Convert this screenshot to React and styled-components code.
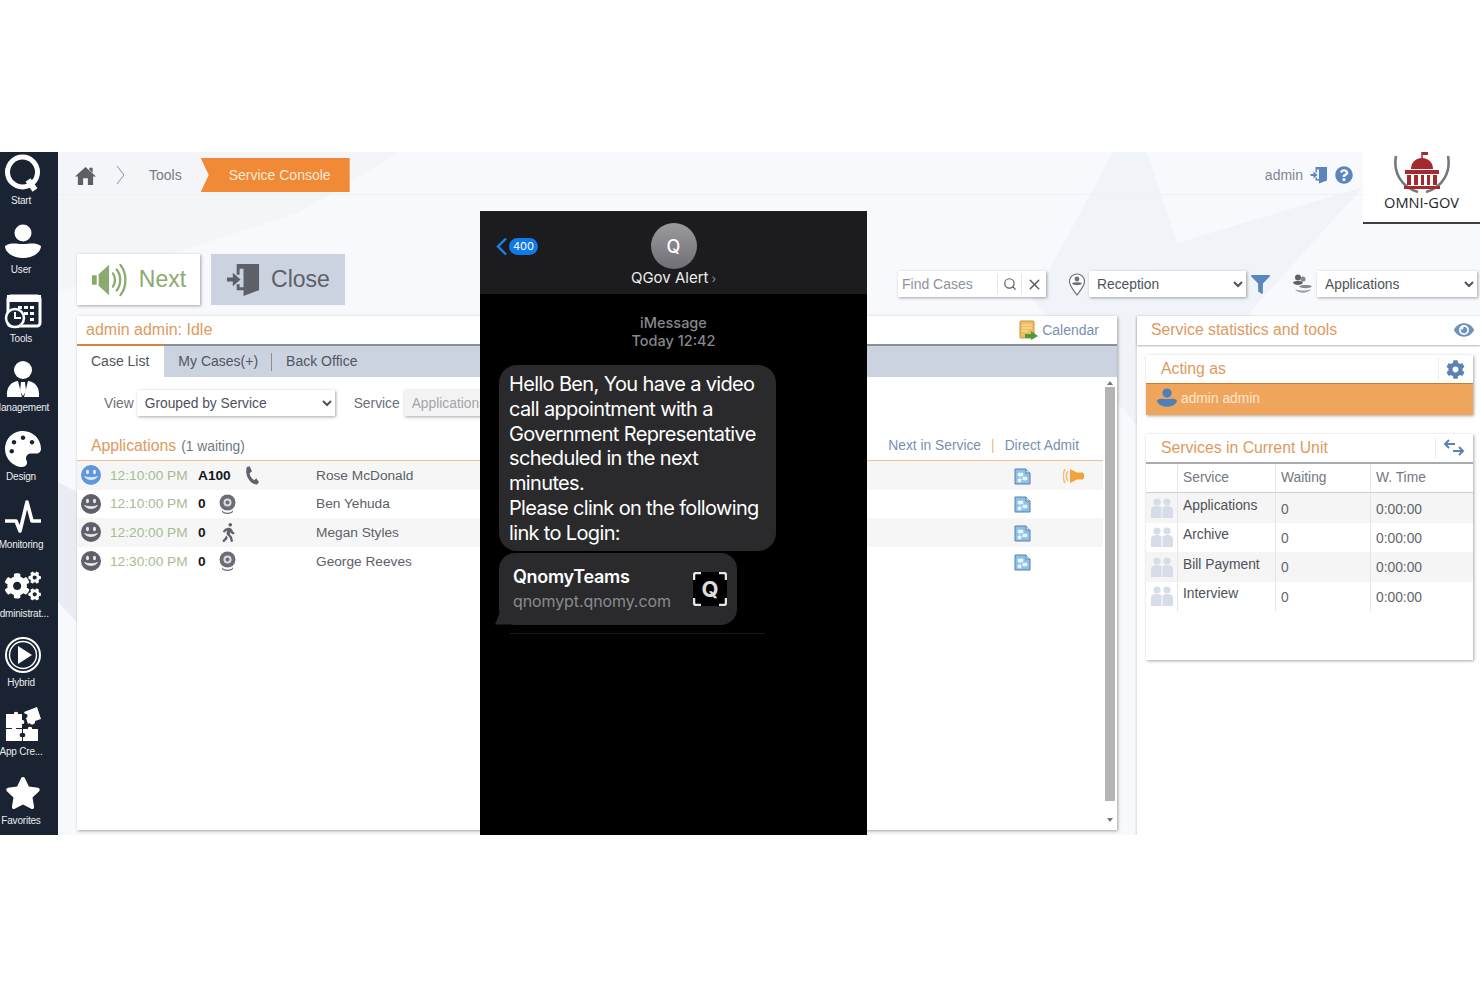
import styled, { createGlobalStyle } from 'styled-components';
import { FaPalette, FaCogs, FaStar, FaCog, FaEye, FaQuestionCircle, FaFilter, FaWalking } from 'react-icons/fa';
import { FiSearch, FiX } from 'react-icons/fi';

const GlobalStyle = createGlobalStyle`
  html, body { margin: 0; padding: 0; background: #fff; }
  body { font-family: "Liberation Sans", Arial, sans-serif; overflow: hidden; }
  * { box-sizing: border-box; }
`;

const Page = styled.div`
  width: 1480px;
  height: 987px;
  padding-top: 152px;
`;

const Frame = styled.div`
  position: relative;
  display: flex;
  width: 1480px;
  height: 683px;
  overflow: hidden;
  background: #f8f9fc;
`;

const Backdrop = styled.svg`
  position: absolute;
  left: 0;
  top: 0;
  pointer-events: none;
`;

/* left rail */
const Sidebar = styled.nav`
  position: relative;
  flex: 0 0 58px;
  display: flex;
  flex-direction: column;
  overflow: hidden;
  background: #1a2332;
`;

const SideItem = styled.div`
  flex: 0 0 68.9px;
  width: 42px;
  display: flex;
  flex-direction: column;
  align-items: center;
  padding-top: 1px;
  color: #fff;
`;

const SideIcon = styled.span`
  flex: 0 0 40px;
  display: flex;
  align-items: center;
  justify-content: center;
  margin-left: 3px;
`;

const SideLabel = styled.span`
  margin-top: 1px;
  font-size: 10px;
  line-height: 13px;
  letter-spacing: -0.2px;
  white-space: nowrap;
  color: #e9ebef;
`;

/* main column */
const Main = styled.div`
  position: relative;
  flex: 1;
  display: flex;
  flex-direction: column;
  min-width: 0;
`;

const TopBar = styled.header`
  height: 43px;
  display: flex;
  align-items: center;
  padding: 4px 127px 0 17px;
  border-bottom: 1px solid #eef0f4;
  color: #5c5f66;
`;

const Crumb = styled.span`
  margin-left: ${(p) => p.$left}px;
  font-size: 14px;
  color: #777b82;
`;

const ActiveCrumb = styled.span`
  display: flex;
  align-items: center;
  width: 149px;
  height: 34px;
  margin-left: 19px;
  padding-left: 28px;
  font-size: 14px;
  color: #fde9d6;
  background: #f08a36;
  clip-path: polygon(0 0, 100% 0, 100% 100%, 0 100%, 8px 50%);
`;

const TopRight = styled.div`
  margin-left: auto;
  display: flex;
  align-items: center;
  gap: 7px;
  font-size: 14px;
  color: #7d8796;
`;

const LogoBox = styled.div`
  position: absolute;
  right: 0;
  top: 0;
  width: 117px;
  height: 72px;
  display: flex;
  flex-direction: column;
  align-items: center;
  background: #fff;
  border-bottom: 2px solid #3c3f46;
`;

const LogoText = styled.span`
  font-family: "Open Sans", sans-serif;
  font-size: 14.6px;
  line-height: 17px;
  color: #23262b;
`;

const Toolbar = styled.div`
  height: 121px;
  display: flex;
  align-items: flex-start;
  padding: 17px 3px 0 19px;
`;

const ActionButton = styled.button`
  height: 51px;
  width: ${(p) => p.$width}px;
  margin-right: 11px;
  display: flex;
  align-items: center;
  justify-content: center;
  gap: 10px;
  margin-top: 42px;
  border: none;
  padding: 0;
  font-family: inherit;
  font-size: 23px;
  color: ${(p) => p.$color};
  background: ${(p) => p.$bg};
  box-shadow: ${(p) => (p.$flat ? 'none' : '1px 1px 3px rgba(0,0,0,.35)')};
`;

const Filters = styled.div`
  margin-left: auto;
  margin-top: 59px;
  display: flex;
  align-items: center;
  height: 26px;
`;

const FindBox = styled.div`
  width: 148px;
  height: 26px;
  display: flex;
  align-items: center;
  padding-left: 4px;
  margin-right: 23px;
  font-size: 14px;
  color: #8f939a;
  background: #fff;
  box-shadow: 1px 1px 3px rgba(0,0,0,.35);
`;

const FindPlaceholder = styled.span`
  width: 96px;
  border-right: 1px solid #e6e6e6;
  line-height: 20px;
`;

const FindIcon = styled.span`
  width: 24px;
  height: 20px;
  display: flex;
  align-items: center;
  justify-content: center;
  color: #555a62;
  border-right: ${(p) => (p.$line ? '1px solid #e6e6e6' : 'none')};
`;

const Select = styled.select`
  width: ${(p) => p.$width}px;
  height: 26px;
  padding: 0 0 0 4px;
  border: none;
  outline: none;
  font-family: inherit;
  font-size: 13.8px;
  color: ${(p) => (p.$muted ? '#a2a5aa' : '#4e5259')};
  background: ${(p) => (p.$muted ? '#f3f3f3' : '#fff')};
  box-shadow: 1px 1px 3px rgba(0,0,0,.35);
`;

const FilterGap = styled.span`
  display: flex;
  align-items: center;
  margin: 0 ${(p) => p.$right}px 0 ${(p) => p.$left}px;
  color: ${(p) => p.$color || '#5f626a'};
`;

const Body = styled.div`
  flex: 1;
  display: flex;
  align-items: flex-start;
  padding-left: 19px;
  gap: 20px;
  min-height: 0;
`;

/* case list */
const CasePanel = styled.section`
  position: relative;
  width: 1040px;
  height: 514px;
  display: flex;
  flex-direction: column;
  background: #fff;
  box-shadow: 1px 1px 3px rgba(0,0,0,.35);
`;

const PanelTitle = styled.div`
  flex: 0 0 28px;
  display: flex;
  align-items: center;
  justify-content: space-between;
  padding: 0 18px 0 9px;
  font-size: 16px;
  color: #dd9a5e;
`;

const CalendarLink = styled.span`
  display: flex;
  align-items: center;
  gap: 3px;
  font-size: 14px;
  color: #7b8fb0;
`;

const Tabs = styled.div`
  flex: 0 0 33px;
  display: flex;
  align-items: center;
  background: #cbd3e0;
  border-top: 2px solid #8b8f98;
  font-size: 14px;
  color: #52565d;
`;

const Tab = styled.span`
  display: flex;
  align-items: center;
  height: ${(p) => (p.$active ? 'calc(100% + 2px)' : '100%')};
  margin-top: ${(p) => (p.$active ? '-2px' : '0')};
  padding: 0 ${(p) => p.$right}px 2px 14px;
  background: ${(p) => (p.$active ? '#fff' : 'transparent')};
  border-top: ${(p) => (p.$active ? '2px solid #d9853a' : 'none')};
`;

const TabDivider = styled.span`
  width: 1px;
  height: 18px;
  background: #8b8f98;
`;

const CaseBody = styled.div`
  flex: 1;
  display: flex;
  min-height: 0;
`;

const CaseContent = styled.div`
  flex: 1;
  min-width: 0;
  padding-top: 13px;
`;

const ViewRow = styled.div`
  display: flex;
  align-items: center;
  height: 26px;
  padding-left: 27px;
  font-size: 13.8px;
  color: #6c7077;
  gap: 3px;
`;

const ServiceLabel = styled.span`
  margin: 0 1px 0 16px;
`;

const SectionRow = styled.div`
  display: flex;
  align-items: flex-end;
  justify-content: space-between;
  height: 45px;
  padding: 0 24px 5px 14px;
  border-bottom: 1px solid #eec08f;
`;

const SectionTitle = styled.span`
  font-size: 15.8px;
  line-height: 18px;
  color: #dd9a5e;
`;

const SectionCount = styled.span`
  margin-left: 5px;
  font-size: 13.8px;
  color: #73777e;
`;

const SectionLinks = styled.span`
  display: flex;
  gap: 10px;
  font-size: 13.8px;
  line-height: 18px;
  color: #7b8fb0;
`;

const LinkDivider = styled.span`
  color: #e8b888;
`;

const CaseRow = styled.div`
  height: 28.6px;
  display: grid;
  grid-template-columns: 29px 88px 118px 1fr 40px 54px 18px;
  align-items: center;
  padding-left: 4px;
  background: ${(p) => (p.$shade ? '#f6f6f6' : '#fff')};
  font-size: 13.7px;
`;

const RowIcon = styled.span`
  display: flex;
  justify-content: ${(p) => p.$align || 'flex-start'};
  align-items: center;
  padding-top: ${(p) => p.$down || 0}px;
  color: #5f626a;
`;

const RowTime = styled.span`
  color: #a8bb92;
`;

const RowCode = styled.span`
  display: flex;
  align-items: center;
  gap: 13px;
  font-weight: 700;
  color: #15171a;
`;

const RowName = styled.span`
  color: #5c6067;
`;

const Scrollbar = styled.div`
  flex: 0 0 14px;
  display: flex;
  flex-direction: column;
  align-items: center;
  padding: 4px 2px;
  background: #fff;
`;

const ScrollThumb = styled.div`
  width: 10px;
  height: 414px;
  margin: 2px 0 17px;
  background: #b4b4b4;
`;

const ScrollArrow = styled.span`
  width: 0;
  height: 0;
  border-left: 3px solid transparent;
  border-right: 3px solid transparent;
  border-${(p) => (p.$down ? 'top' : 'bottom')}: 4px solid #777;
`;

/* right column */
const SideColumn = styled.aside`
  width: 343px;
  align-self: stretch;
  display: flex;
  flex-direction: column;
  background: #fff;
  box-shadow: -1px 0 2px rgba(0,0,0,.12);
`;

const StatsTitle = styled.div`
  height: 29px;
  display: flex;
  align-items: center;
  justify-content: space-between;
  padding: 0 6px 2px 14px;
  font-size: 15.8px;
  color: #dd9a5e;
  background: #fff;
  box-shadow: 0 1px 2px rgba(0,0,0,.3);
  svg { color: #6b93bd; }
`;

const Card = styled.div`
  width: 327px;
  margin: ${(p) => p.$top}px 0 0 9px;
  display: flex;
  flex-direction: column;
  height: ${(p) => p.$height}px;
  background: #fff;
  box-shadow: 1px 1px 3px rgba(0,0,0,.35);
`;

const CardHead = styled.div`
  flex: 0 0 28px;
  display: flex;
  align-items: center;
  justify-content: space-between;
  padding: 0 8px 0 15px;
  font-size: 15.8px;
  color: #dd9a5e;
`;

const CardTool = styled.span`
  display: flex;
  align-items: center;
  justify-content: center;
  height: 22px;
  padding-left: 7px;
  border-left: 1px solid #ececec;
  color: #5a83b4;
`;

const ActingRow = styled.div`
  flex: 1;
  display: flex;
  align-items: center;
  gap: 3px;
  padding: 0 0 3px 10px;
  font-size: 13.8px;
  color: #fbe7d2;
  background: #f0a55d;
  border-top: 1px solid #c57c37;
`;

const ServiceTable = styled.div`
  display: grid;
  grid-template-columns: 31px 98px 95px 1fr;
  grid-auto-rows: 29.4px;
  border-top: 2px solid #a9abb0;
  font-size: 13.8px;
  color: #5c6067;
`;

const HeadCell = styled.div`
  display: flex;
  align-items: center;
  padding: 0 0 2px ${(p) => (p.$first ? 0 : 5)}px;
  border-left: ${(p) => (p.$first ? 'none' : '1px solid #e6e6e6')};
  border-bottom: 1px solid #cfcfcf;
  color: #74787f;
`;

const Cell = styled.div`
  display: flex;
  align-items: center;
  justify-content: ${(p) => (p.$first ? 'center' : 'flex-start')};
  padding: ${(p) => (p.$up ? '0 0 5px 5px' : p.$first ? '0' : '2px 0 0 5px')};
  border-left: ${(p) => (p.$first ? 'none' : '1px solid #e6e6e6')};
  background: ${(p) => (p.$shade ? '#f5f5f5' : '#fff')};
  color: ${(p) => (p.$up ? '#4d5158' : '#62666d')};
`;

/* phone overlay */
const Phone = styled.div`
  position: absolute;
  left: 480px;
  top: 59px;
  bottom: 0;
  width: 387px;
  display: flex;
  flex-direction: column;
  background: #000;
  font-family: Inter, "Liberation Sans", sans-serif;
  color: #fff;
`;

const PhoneHead = styled.div`
  position: relative;
  flex: 0 0 83px;
  display: flex;
  flex-direction: column;
  align-items: center;
  padding-top: 12px;
  background: #1c1c1e;
`;

const BackLink = styled.div`
  position: absolute;
  left: 15px;
  top: 26px;
  display: flex;
  align-items: center;
  gap: 1px;
`;

const Badge = styled.span`
  width: 29px;
  height: 17px;
  border-radius: 9px;
  font-size: 11px;
  line-height: 17px;
  text-align: center;
  background: #0f7ae8;
`;

const Avatar = styled.div`
  width: 46px;
  height: 46px;
  border-radius: 50%;
  display: flex;
  align-items: center;
  justify-content: center;
  font-size: 18px;
  font-weight: 500;
  background: linear-gradient(#9a9a9f, #6f6f75);
`;

const ContactName = styled.div`
  margin-top: -1px;
  font-size: 15px;
  line-height: 20px;
  color: #eee;
`;

const ContactChevron = styled.span`
  margin-left: 3px;
  font-size: 12px;
  color: #8e8e93;
`;

const Stamp = styled.div`
  margin-top: 20px;
  text-align: center;
  font-size: 14.5px;
  line-height: 18px;
  font-weight: 500;
  color: #87878c;
`;

const Bubble = styled.div`
  width: 277px;
  margin: 15px 0 0 19px;
  padding: 7px 10px 5px;
  border-radius: 18px;
  font-size: 20px;
  line-height: 24.8px;
  letter-spacing: -0.65px;
  background: #2a2a2c;
`;

const LinkCard = styled.div`
  position: relative;
  width: 238px;
  height: 72px;
  margin: 2px 0 0 19px;
  padding: 12px 10px 0 14px;
  display: flex;
  justify-content: space-between;
  border-radius: 16px;
  background: #2a2a2c;
  &::before {
    content: '';
    position: absolute;
    left: -4px;
    bottom: 0;
    width: 14px;
    height: 12px;
    background: #2a2a2c;
    clip-path: polygon(35% 0, 100% 0, 100% 100%, 0 100%);
  }
`;

const LinkTitle = styled.div`
  font-size: 18px;
  line-height: 24px;
  font-weight: 600;
  letter-spacing: -0.3px;
`;

const LinkHost = styled.div`
  font-size: 16px;
  line-height: 24px;
  letter-spacing: -0.1px;
  color: #8b8b90;
`;

const LinkThumb = styled.div`
  position: relative;
  width: 34px;
  height: 34px;
  margin-top: 7px;
  display: flex;
  align-items: center;
  justify-content: center;
  border-radius: 6px;
  background: #000;
  font-size: 22px;
  font-weight: 700;
  color: #ddd;
`;

const ThumbCorners = styled.svg`
  position: absolute;
  inset: 0;
`;

const Hairline = styled.div`
  width: 255px;
  height: 1px;
  margin: 8px 0 0 30px;
  background: #1a1a1c;
`;

/* drawings */
const QLogo = () => (
  <svg width="38" height="38" viewBox="0 0 38 38" fill="none">
    <circle cx="18.500" cy="18" r="15" stroke="#fff" strokeWidth="5" />
    <path d="M24 26 L31 36" stroke="#fff" strokeWidth="6" />
  </svg>
);

const UserIcon = ({ size = 40, color = '#fff' }) => (
  <svg width={size} height={size} viewBox="0 0 40 40" fill={color}>
    <circle cx="20" cy="11" r="8.500" />
    <path d="M2 24 C8 20 13 22 20 22 C27 22 32 20 38 24 C38 31 29 36 20 36 C11 36 2 31 2 24Z" />
  </svg>
);

const HomeIcon = () => (
  <svg width="21" height="21" viewBox="0 0 22 22" fill="#5c5f66">
    <path d="M11 2 L22 12 H19 V21 H13.500 V14 H8.500 V21 H3 V12 H0Z" />
    <path d="M15 3 H18.500 V8 L15 5Z" />
  </svg>
);

const CrumbChevron = () => (
  <svg width="10" height="20" viewBox="0 0 10 20" fill="none" style={{ marginLeft: 20 }}>
    <path d="M1 1 L8 10 L1 19" stroke="#8a8d93" strokeWidth="1" />
  </svg>
);

const CalendarClock = () => (
  <svg width="38" height="38" viewBox="0 0 38 38" fill="none">
    <rect x="4" y="4" width="32" height="30" rx="3" stroke="#fff" strokeWidth="3" />
    <rect x="3" y="3" width="34" height="7" fill="#fff" />
    <g fill="#fff">
      <rect x="14" y="14" width="4" height="3" /><rect x="20" y="14" width="4" height="3" /><rect x="26" y="14" width="4" height="3" />
      <rect x="20" y="20" width="4" height="3" /><rect x="26" y="20" width="4" height="3" /><rect x="26" y="26" width="4" height="3" />
    </g>
    <circle cx="11" cy="26" r="9" fill="#1a2332" stroke="#fff" strokeWidth="2.500" />
    <path d="M11 20 V26 H17" stroke="#fff" strokeWidth="2" />
  </svg>
);

const ManagerIcon = () => (
  <svg width="40" height="40" viewBox="0 0 40 40" fill="#fff">
    <circle cx="20" cy="10" r="9" />
    <path d="M4 37 C3 27 8 22 15 21 L19 37Z M36 37 C37 27 32 22 25 21 L21 37Z" />
    <path d="M18 22 H22 L23 31 L20 36 L17 31Z" />
  </svg>
);

const PulseIcon = () => (
  <svg width="40" height="36" viewBox="0 0 40 36" fill="none">
    <path d="M2 22 H13 L17 32 L24 3 L29 22 H38" stroke="#fff" strokeWidth="3.600" strokeLinejoin="round" />
  </svg>
);

const PlayIcon = () => (
  <svg width="38" height="38" viewBox="0 0 38 38" fill="none">
    <circle cx="19" cy="19" r="17" stroke="#fff" strokeWidth="2" />
    <circle cx="19" cy="19" r="13.500" stroke="#fff" strokeWidth="1.400" />
    <path d="M14 10 L28 19 L14 28Z" fill="#fff" />
  </svg>
);

const PuzzleIcon = () => (
  <svg width="38" height="38" viewBox="0 0 38 38" fill="#fff">
    <path d="M2 9 H10 C9 6 15 6 14 9 H18 V15 C21 14 21 20 18 19 V23 H2Z" />
    <path d="M2 24 H8 C7 21 13 21 12 24 H18 V28 C15 27 15 33 18 32 V36 H2Z" />
    <path d="M19 24 H24 C23 21 29 21 28 24 H34 V36 H19 V32 C22 33 22 27 19 28Z" />
    <path d="M20 7 L33 2 L37 14 L31 16 C32 19 27 21 26 18 L24 19 L22 13 C25 12 23 8 21 9Z" />
  </svg>
);

const SpeakerGreen = () => (
  <svg width="38" height="36" viewBox="0 0 40 38" fill="none">
    <path d="M1 14 H6 V24 H1Z M8 13 L19 3 V35 L8 25Z" fill="#8aab6d" />
    <path d="M23 12 C26 16 26 22 23 26 M27 8 C32 14 32 24 27 30 M31 3 C38 12 38 26 31 35" stroke="#8aab6d" strokeWidth="2.400" strokeLinecap="round" />
  </svg>
);

const DoorIcon = ({ size = 35, color = '#5d6068' }) => (
  <svg width={size} height={size} viewBox="0 0 36 36" fill={color}>
    <path d="M11 2 H34 V29 L18 35 V29 H11 V23 H14 V26 H18 V7 H14 V13 H11Z" />
    <path d="M1 16 H7 V11 L15 18 L7 25 V20 H1Z" />
  </svg>
);

const Smiley = ({ color }) => (
  <svg width="20" height="20" viewBox="0 0 20 20">
    <circle cx="10" cy="10" r="10" fill={color} />
    <ellipse cx="6.500" cy="7" rx="1.500" ry="2.200" fill="#e8e8ee" />
    <ellipse cx="13.500" cy="7" rx="1.500" ry="2.200" fill="#e8e8ee" />
    <path d="M3.500 11.500 C6 15.500 14 15.500 16.500 11.500 C14 13 6 13 3.500 11.500Z" fill="#e8e8ee" stroke="#e8e8ee" strokeWidth="0.800" />
  </svg>
);

const Webcam = () => (
  <svg width="17" height="20" viewBox="0 0 17 20">
    <circle cx="8.500" cy="8.500" r="8" fill="#6b6e77" />
    <circle cx="8.500" cy="8.500" r="4" fill="#dcdde1" />
    <circle cx="8.500" cy="8.500" r="2" fill="#6b6e77" />
    <path d="M3 16 C4 19.500 13 19.500 14 16 L14 18 C12 20.500 5 20.500 3 18Z" fill="#6b6e77" />
  </svg>
);

const Handset = () => (
  <svg width="15" height="19" viewBox="0 0 16 20" fill="#5f626a">
    <path d="M3 1 L6 0 L8.500 5.500 L6 7.500 C6 10 8 13 11 15 L13 13 L16 17 L14 19.500 C8 20 0 11 3 1Z" />
  </svg>
);

const Phonebook = () => (
  <svg width="17" height="17" viewBox="0 0 17 17">
    <path d="M1 1 H12 L16 5 V16 H1Z" fill="#8cc0ea" stroke="#5a7ea6" />
    <path d="M12 1 V5 H16" fill="#dcecf8" stroke="#5a7ea6" />
    <path d="M4 5 H9 V8 H4Z M9 9 H13 V12 H9Z M4 11 H7 V14 H4Z M6 8 V11 M9 11 H7" fill="#eaf4fb" stroke="#eaf4fb" strokeWidth="0.600" />
  </svg>
);

const SpeakerOrange = () => (
  <svg width="22" height="16" viewBox="0 0 22 16" fill="none">
    <path d="M7 1 L14 4.500 H19 C22 4.500 22 11.500 19 11.500 H14 L7 15Z" fill="#f2a33c" />
    <path d="M5 3 C3 6 3 10 5 13 M2 1 C0 5 0 11 2 15" stroke="#f5bd72" strokeWidth="1.600" />
  </svg>
);

const CalendarGo = () => (
  <svg width="20" height="21" viewBox="0 0 20 21">
    <rect x="1" y="1" width="14" height="17" rx="1" fill="#f1bd5e" stroke="#c9933a" />
    <path d="M3 5 H13 M3 8 H13 M3 11 H9" stroke="#fbe6b8" />
    <path d="M6 14 H12 V11 L19 16 L12 20 V18 H6Z" fill="#4f9a3c" />
  </svg>
);

const PinPerson = () => (
  <svg width="16" height="23" viewBox="0 0 16 23">
    <path d="M8 1 C12 1 15.500 4 15.500 8.500 C15.500 13 11 18 8 22 C5 18 .5 13 .5 8.500 C.5 4 4 1 8 1Z" fill="#fff" stroke="#6d7078" strokeWidth="1.200" />
    <circle cx="8" cy="6" r="2.400" fill="#6d7078" />
    <path d="M3 10 C5 9 11 9 13 10 C13 13 3 13 3 10Z" fill="#6d7078" />
  </svg>
);

const PeopleStack = () => (
  <svg width="21" height="20" viewBox="0 0 21 20" fill="#5f626a">
    <circle cx="6" cy="3.500" r="3" />
    <circle cx="11" cy="5" r="2.600" fill="#85888f" />
    <path d="M1 8 C3 6.500 9 6.500 11 8 C11 12 1 12 1 8Z" />
    <path d="M7 12 C10 10.500 17 10.500 20 12 C19 15 8 15 7 12Z" fill="#85888f" />
    <path d="M3 15 C7 17 15 17 19 15 C16 20 6 20 3 15Z" fill="#9a9da3" />
  </svg>
);

const SwapArrows = () => (
  <svg width="22" height="18" viewBox="0 0 22 18" fill="none" stroke="#5a83b4" strokeWidth="2">
    <path d="M12 5 H2 M6 1 L2 5 L6 9" />
    <path d="M10 12 H20 M16 8 L20 12 L16 16" />
  </svg>
);

const GroupIcon = () => (
  <svg width="22" height="20" viewBox="0 0 22 20" fill="#d6dde9">
    <circle cx="6" cy="4" r="3.600" />
    <circle cx="16" cy="4" r="3.600" />
    <path d="M0 20 V12 C0 9 3 8 6 8 C8 8 9.500 8.500 10.500 9.500 V20Z" />
    <path d="M11.500 20 V9.500 C12.500 8.500 14 8 16 8 C19 8 22 9 22 12 V20Z" />
  </svg>
);

const OmniLogo = () => (
  <svg width="58" height="42" viewBox="0 0 58 42">
    <path d="M3 4 C0 20 8 35 25 40 M55 4 C58 20 50 35 33 40" fill="none" stroke="#73777e" strokeWidth="2.600" />
    <path d="M29 0 V7" stroke="#a52a2d" strokeWidth="1.500" />
    <path d="M29 0 H35 V3 H29Z" fill="#a52a2d" />
    <path d="M18 17 C18 10 23 6 29 6 C35 6 40 10 40 17Z" fill="#a52a2d" />
    <path d="M12 18 H46 V22 H12Z" fill="#a52a2d" />
    <path d="M14 23 H18 V33 H14Z M21 23 H25 V33 H21Z M28 23 H31 V33 H28Z M34 23 H37 V33 H34Z M40 23 H44 V33 H40Z M11 34 H47 V37 H11Z" fill="#a52a2d" />
  </svg>
);

const sideItems = [
  { label: 'Start', icon: <QLogo /> },
  { label: 'User', icon: <UserIcon /> },
  { label: 'Tools', icon: <CalendarClock /> },
  { label: 'Management', icon: <ManagerIcon /> },
  { label: 'Design', icon: <FaPalette size={36} /> },
  { label: 'Monitoring', icon: <PulseIcon /> },
  { label: 'Administrat...', icon: <FaCogs size={36} /> },
  { label: 'Hybrid', icon: <PlayIcon /> },
  { label: 'App Cre...', icon: <PuzzleIcon /> },
  { label: 'Favorites', icon: <FaStar size={36} /> },
];

const cases = [
  { time: '12:10:00 PM', code: 'A100', name: 'Rose McDonald', kind: 'phone', active: true },
  { time: '12:10:00 PM', code: '0', name: 'Ben Yehuda', kind: 'video' },
  { time: '12:20:00 PM', code: '0', name: 'Megan Styles', kind: 'walk' },
  { time: '12:30:00 PM', code: '0', name: 'George Reeves', kind: 'video' },
];

const services = ['Applications', 'Archive', 'Bill Payment', 'Interview'];

const KindIcon = ({ kind }) => {
  if (kind === 'phone') return <RowIcon><Handset /></RowIcon>;
  if (kind === 'walk') return <RowIcon><FaWalking size={19} /></RowIcon>;
  return <RowIcon><Webcam /></RowIcon>;
};

const App = () => {
  return (
    <>
      <GlobalStyle />
      <Page>
        <Frame>
          <Backdrop width="1480" height="683" viewBox="0 0 1480 683">
            <path d="M58 0 H400 L300 60 L58 140Z" fill="#f4f5f9" />
            <path d="M1113 0 H1147 L1177 91 L1363 35 L1250 160 L1330 420 L1150 290 L1033 148Z" fill="#f0f3f7" />
            <path d="M58 330 L77 340 V470 L58 450Z" fill="#e9ecf2" />
          </Backdrop>
          <Sidebar>
            {sideItems.map((item) => (
              <SideItem key={item.label}>
                <SideIcon>{item.icon}</SideIcon>
                <SideLabel>{item.label}</SideLabel>
              </SideItem>
            ))}
          </Sidebar>
          <Main>
            <TopBar>
              <HomeIcon />
              <CrumbChevron />
              <Crumb $left={23}>Tools</Crumb>
              <ActiveCrumb>Service Console</ActiveCrumb>
              <TopRight>
                admin
                <DoorIcon size={18} color="#5b86bd" />
                <FaQuestionCircle size={18} color="#5b86bd" />
              </TopRight>
            </TopBar>
            <LogoBox>
              <OmniLogo />
              <LogoText>OMNI-GOV</LogoText>
            </LogoBox>
            <Toolbar>
              <ActionButton $width={123} $bg="#fff" $color="#8aab6d">
                <SpeakerGreen />
                Next
              </ActionButton>
              <ActionButton $width={134} $bg="#cbd3e0" $color="#5d6068" $flat>
                <DoorIcon />
                Close
              </ActionButton>
              <Filters>
                <FindBox>
                  <FindPlaceholder>Find Cases</FindPlaceholder>
                  <FindIcon $line><FiSearch size={14} /></FindIcon>
                  <FindIcon><FiX size={17} /></FindIcon>
                </FindBox>
                <FilterGap $left={0} $right={4}><PinPerson /></FilterGap>
                <Select $width={157} defaultValue="Reception">
                  <option>Reception</option>
                </Select>
                <FilterGap $left={5} $right={22} $color="#5b86bd"><FaFilter size={19} /></FilterGap>
                <FilterGap $left={0} $right={4}><PeopleStack /></FilterGap>
                <Select $width={160} defaultValue="Applications">
                  <option>Applications</option>
                </Select>
              </Filters>
            </Toolbar>
            <Body>
              <CasePanel>
                <PanelTitle>
                  admin admin: Idle
                  <CalendarLink><CalendarGo />Calendar</CalendarLink>
                </PanelTitle>
                <Tabs>
                  <Tab $active $right={15}>Case List</Tab>
                  <Tab $right={13}>My Cases(+)</Tab>
                  <TabDivider />
                  <Tab $right={14}>Back Office</Tab>
                </Tabs>
                <CaseBody>
                  <CaseContent>
                    <ViewRow>
                      View
                      <Select $width={198} defaultValue="Grouped by Service">
                        <option>Grouped by Service</option>
                      </Select>
                      <ServiceLabel>Service</ServiceLabel>
                      <Select $width={160} $muted defaultValue="Applications">
                        <option>Applications</option>
                      </Select>
                    </ViewRow>
                    <SectionRow>
                      <span>
                        <SectionTitle>Applications</SectionTitle>
                        <SectionCount>(1 waiting)</SectionCount>
                      </span>
                      <SectionLinks>
                        Next in Service
                        <LinkDivider>|</LinkDivider>
                        Direct Admit
                      </SectionLinks>
                    </SectionRow>
                    {cases.map((c, i) => (
                      <CaseRow key={c.name} $shade={i % 2 === 0}>
                        <RowIcon><Smiley color={c.active ? '#5f97dc' : '#5f6069'} /></RowIcon>
                        <RowTime>{c.time}</RowTime>
                        <RowCode>
                          {c.code}
                          <KindIcon kind={c.kind} />
                        </RowCode>
                        <RowName>{c.name}</RowName>
                        <RowIcon $align="flex-end" $down={2}><Phonebook /></RowIcon>
                        <RowIcon $align="flex-end" $down={2}>{c.active && <SpeakerOrange />}</RowIcon>
                        <span />
                      </CaseRow>
                    ))}
                  </CaseContent>
                  <Scrollbar>
                    <ScrollArrow />
                    <ScrollThumb />
                    <ScrollArrow $down />
                  </Scrollbar>
                </CaseBody>
              </CasePanel>
              <SideColumn>
                <StatsTitle>
                  Service statistics and tools
                  <FaEye size={20} />
                </StatsTitle>
                <Card $top={10} $height={60}>
                  <CardHead>
                    Acting as
                    <CardTool><FaCog size={19} /></CardTool>
                  </CardHead>
                  <ActingRow>
                    <UserIcon size={22} color="#4f7fb8" />
                    admin admin
                  </ActingRow>
                </Card>
                <Card $top={19} $height={226}>
                  <CardHead>
                    Services in Current Unit
                    <CardTool><SwapArrows /></CardTool>
                  </CardHead>
                  <ServiceTable>
                    <HeadCell $first />
                    <HeadCell>Service</HeadCell>
                    <HeadCell>Waiting</HeadCell>
                    <HeadCell>W. Time</HeadCell>
                    {services.map((s, i) => [
                      <Cell key={`${s}-icon`} $first $shade={i % 2 === 0}><GroupIcon /></Cell>,
                      <Cell key={s} $up $shade={i % 2 === 0}>{s}</Cell>,
                      <Cell key={`${s}-wait`} $shade={i % 2 === 0}>0</Cell>,
                      <Cell key={`${s}-time`} $shade={i % 2 === 0}>0:00:00</Cell>,
                    ])}
                  </ServiceTable>
                </Card>
              </SideColumn>
            </Body>
          </Main>
          <Phone>
            <PhoneHead>
              <BackLink>
                <svg width="13" height="19" viewBox="0 0 13 19" fill="none">
                  <path d="M11 1.500 L3 9.500 L11 17.500" stroke="#1a82ee" strokeWidth="2.400" />
                </svg>
                <Badge>400</Badge>
              </BackLink>
              <Avatar>Q</Avatar>
              <ContactName>QGov Alert<ContactChevron>›</ContactChevron></ContactName>
            </PhoneHead>
            <Stamp>iMessage<br />Today 12:42</Stamp>
            <Bubble>
              Hello Ben, You have a video call appointment with a Government Representative scheduled in the next minutes.<br />
              Please clink on the following link to Login:
            </Bubble>
            <LinkCard>
              <div>
                <LinkTitle>QnomyTeams</LinkTitle>
                <LinkHost>qnomypt.qnomy.com</LinkHost>
              </div>
              <LinkThumb>
                Q
                <ThumbCorners width="34" height="34" viewBox="0 0 34 34" fill="none">
                  <path d="M1 8 V3 C1 2 2 1 3 1 H8 M26 1 H31 C32 1 33 2 33 3 V8 M33 26 V31 C33 32 32 33 31 33 H26 M8 33 H3 C2 33 1 32 1 31 V26" stroke="#e6e6e6" strokeWidth="2.500" />
                </ThumbCorners>
              </LinkThumb>
            </LinkCard>
            <Hairline />
          </Phone>
        </Frame>
      </Page>
    </>
  );
};

export default App;
